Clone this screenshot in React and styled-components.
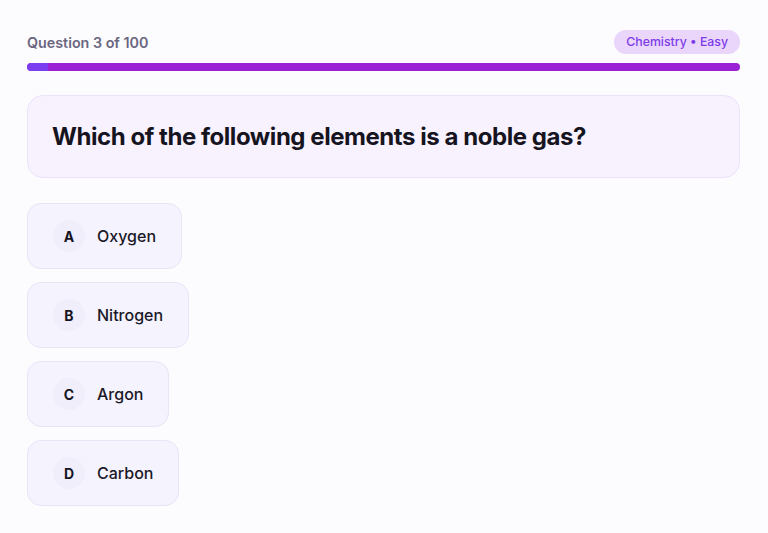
import React from "react"
import styled, { createGlobalStyle } from "styled-components"

const GlobalStyle = createGlobalStyle`
  html, body {
    margin: 0;
    background: #fcfbfe;
    font-family: Inter, "Noto Sans", sans-serif;
  }
`

const Page = styled.div`
  padding: 30px 28px 20px 27px;
  display: flex;
  flex-direction: column;
`

const Header = styled.div`
  display: flex;
  align-items: center;
  justify-content: space-between;
  height: 24px;
`

const Counter = styled.div`
  font-size: 14.3px;
  font-weight: 600;
  color: #6a6680;
`

const Badge = styled.div`
  background: #ead5fb;
  color: #7e3bea;
  font-size: 12.3px;
  font-weight: 500;
  padding: 0 12px;
  height: 24px;
  line-height: 24px;
  border-radius: 12px;
`

const Track = styled.div`
  margin-top: 9px;
  height: 8px;
  border-radius: 4px;
  background: #9b22d4;
  overflow: hidden;
`

const Fill = styled.div`
  height: 100%;
  background: #7a3ef0;
  border-radius: 4px 0 0 4px;
`

const QuestionCard = styled.div`
  margin-top: 24px;
  background: #f8f1fe;
  border: 1px solid #ece3fb;
  border-radius: 16px;
  padding: 0 24px;
  height: 81px;
  display: flex;
  align-items: center;
`

const QuestionText = styled.h1`
  margin: 0;
  font-size: 24px;
  font-weight: 700;
  color: #16141f;
  letter-spacing: -0.45px;
`

const Options = styled.div`
  margin-top: 25px;
  display: flex;
  flex-direction: column;
  align-items: flex-start;
  gap: 13px;
`

const Option = styled.button`
  display: flex;
  align-items: center;
  gap: 12px;
  height: 66px;
  box-sizing: border-box;
  padding: 0 25px;
  background: #f5f3fe;
  border: 1px solid #e8e5f7;
  border-radius: 14px;
  font-family: inherit;
  cursor: pointer;
`

const Letter = styled.span`
  width: 32px;
  height: 32px;
  border-radius: 50%;
  background: #f0eefa;
  display: flex;
  align-items: center;
  justify-content: center;
  font-size: 14px;
  font-weight: 700;
  color: #16141f;
`

const Label = styled.span`
  font-size: 16px;
  font-weight: 500;
  color: #1b1928;
`

const answers = [
  ["A", "Oxygen"],
  ["B", "Nitrogen"],
  ["C", "Argon"],
  ["D", "Carbon"],
]

export default function App() {
  return (
    <>
      <GlobalStyle />
      <Page>
        <Header>
          <Counter>Question 3 of 100</Counter>
          <Badge>Chemistry • Easy</Badge>
        </Header>
        <Track>
          <Fill style={{ width: `${(3 / 100) * 100}%` }} />
        </Track>
        <QuestionCard>
          <QuestionText>Which of the following elements is a noble gas?</QuestionText>
        </QuestionCard>
        <Options>
          {answers.map(([key, text]) => (
            <Option key={key}>
              <Letter>{key}</Letter>
              <Label>{text}</Label>
            </Option>
          ))}
        </Options>
      </Page>
    </>
  )
}
